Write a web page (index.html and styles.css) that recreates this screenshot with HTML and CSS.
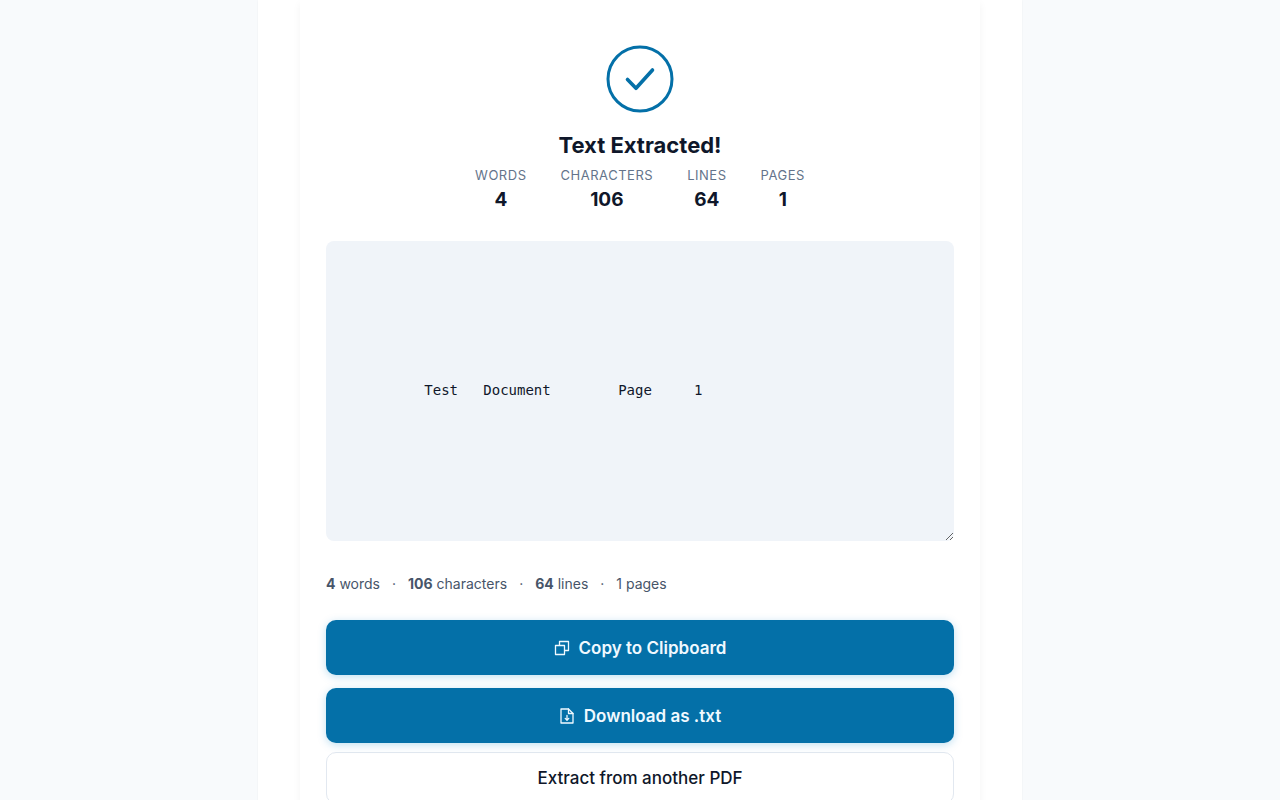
FILE: index.html
```html
<!DOCTYPE html>
<html lang="en">
<head>
  <meta charset="UTF-8">
  <meta name="viewport" content="width=device-width, initial-scale=1.0">
  <title>Extract Text from PDF</title>
  <link rel="stylesheet" href="styles.css">
</head>
<body>
  <main class="page">
    <section class="card">
      <div class="result-head">
        <svg class="check" viewBox="0 0 68 68" fill="none" stroke="currentColor" stroke-width="3" stroke-linecap="round" stroke-linejoin="round" aria-hidden="true">
          <circle cx="34" cy="34" r="32"/>
          <path stroke-width="3.6" d="M21.500 34.500l8.500 8.800 16.500-18.300"/>
        </svg>
        <h2>Text Extracted!</h2>
        <dl class="stats">
          <div><dt>Words</dt><dd>4</dd></div>
          <div><dt>Characters</dt><dd>106</dd></div>
          <div><dt>Lines</dt><dd>64</dd></div>
          <div><dt>Pages</dt><dd>1</dd></div>
        </dl>
      </div>

      <textarea class="output" aria-label="Extracted text" readonly spellcheck="false">





          Test   Document        Page     1</textarea>

      <p class="summary">
        <span><strong>4</strong> words</span>
        <span>·</span>
        <span><strong>106</strong> characters</span>
        <span>·</span>
        <span><strong>64</strong> lines</span>
        <span>·</span>
        <span>1 pages</span>
      </p>

      <div class="actions">
        <button class="btn" type="button">
          <svg viewBox="0 0 16 16" fill="none" stroke="currentColor" stroke-width="1.3" stroke-linejoin="round" aria-hidden="true">
            <path d="M1.500 5.500h9v9h-9z"/>
            <path d="M5.500 5.500v-4h9v9h-4"/>
          </svg>
          Copy to Clipboard
        </button>
        <button class="btn" type="button">
          <svg viewBox="0 0 16 16" fill="none" stroke="currentColor" stroke-width="1.3" stroke-linecap="round" stroke-linejoin="round" aria-hidden="true">
            <path d="M2 1h7.500l4.500 4.500v9.500h-12z"/>
            <path d="M9.500 1v4.500h4.500"/>
            <path d="M8 7.500v4.500M6.200 10.400l1.800 1.800 1.800-1.800"/>
          </svg>
          Download as .txt
        </button>
      </div>
      <button class="btn btn-outline" type="button">Extract from another PDF</button>
    </section>
  </main>
</body>
</html>
```

FILE: styles.css
```css
* { box-sizing: border-box; }
body {
  margin: 0;
  background: #f8fafc;
  color: #0f172a;
  font-family: Inter, "Liberation Sans", sans-serif;
  font-size: 16px;
}
.page {
  max-width: 764px;
  min-height: 100vh;
  margin: 0 auto;
  padding: 0 42px 48px;
  background: #fff;
  box-shadow: 0 0 2px rgba(15, 23, 42, 0.05);
}
.card {
  padding: 45px 26px 26px;
  border-radius: 0 0 16px 16px;
  box-shadow: 0 4px 8px rgba(15, 23, 42, 0.05);
}
.result-head {
  display: flex;
  flex-direction: column;
  align-items: center;
}
.check {
  width: 68px;
  height: 68px;
  color: #0470a8;
}
h2 {
  margin: 16px 0 5px;
  font-size: 22px;
  font-weight: 700;
  line-height: 32px;
}
.stats {
  display: flex;
  gap: 34px;
  margin: 0;
  text-align: center;
}
.stats dt {
  color: #64748b;
  font-size: 13px;
  line-height: 18px;
  letter-spacing: 0.04em;
  text-transform: uppercase;
}
.stats dd {
  margin: 0;
  font-size: 19px;
  font-weight: 700;
  line-height: 32px;
}
.output {
  display: block;
  width: 100%;
  height: 300px;
  margin-top: 25px;
  padding: 17px 14px;
  border: 0;
  border-radius: 8px;
  background: #f0f4f9;
  color: #0f172a;
  font-family: "DejaVu Sans Mono", monospace;
  font-size: 14px;
  line-height: 24px;
  resize: vertical;
}
.summary {
  display: flex;
  gap: 12px;
  margin: 32px 0 25px;
  color: #475569;
  font-size: 14px;
  line-height: 22px;
}
.actions {
  display: grid;
  gap: 13px;
  margin-bottom: 9px;
}
.btn {
  display: flex;
  align-items: center;
  justify-content: center;
  gap: 9px;
  width: 100%;
  height: 55px;
  border: 0;
  border-radius: 10px;
  background: #0470a8;
  box-shadow: 0 2px 8px rgba(4, 132, 199, 0.25);
  color: #f0f9ff;
  font-family: inherit;
  font-size: 17px;
  font-weight: 600;
  cursor: pointer;
}
.btn svg {
  width: 16px;
  height: 16px;
}
.btn-outline {
  height: 52px;
  border: 1px solid #e2e8f0;
  background: #fff;
  box-shadow: none;
  color: #0f172a;
  font-weight: 500;
}
```
